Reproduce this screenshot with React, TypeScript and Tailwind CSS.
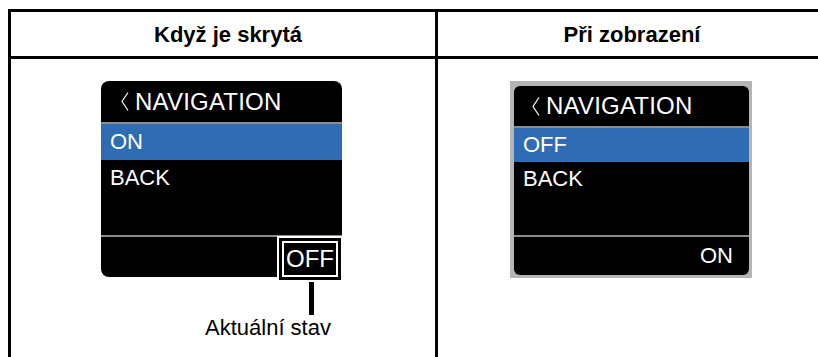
import type { ReactNode } from 'react'

function Chevron() {
  return (
    <svg width="8" height="19" viewBox="0 0 8 19" className="shrink-0">
      <polyline points="7,0.5 1,9.5 7,18.5" fill="none" stroke="white" strokeWidth="1.2" />
    </svg>
  )
}

function Title({ pl }: { pl: string }) {
  return (
    <div className={`flex items-center gap-[6px] ${pl}`}>
      <Chevron />
      <span className="text-[24px] leading-none tracking-[0.2px]">NAVIGATION</span>
    </div>
  )
}

function Row({ children, className }: { children: ReactNode; className: string }) {
  return <div className={`flex items-center pl-[9px] text-[22px] leading-none ${className}`}>{children}</div>
}

function HiddenScreen() {
  return (
    <div className="relative w-[241px]">
      <div className="flex h-[196px] flex-col overflow-hidden rounded-[8px] bg-black text-white">
        <div className="flex h-[41px] items-center">
          <Title pl="pl-[20px]" />
        </div>
        <div className="h-[2px] bg-[#8c8c8c]" />
        <Row className="h-[36px] bg-[#2f6cb4]">ON</Row>
        <Row className="h-[36px]">BACK</Row>
        <div className="flex-1" />
        <div className="h-[2px] bg-[#8c8c8c]" />
        <div className="h-[40px]" />
      </div>
      {/* highlight over current state */}
      <div className="absolute right-[-1px] top-[155px] h-[46px] w-[66px] border-2 border-white">
        <div className="h-full w-full border-[3px] border-black">
          <div className="flex h-full w-full items-center justify-center border-2 border-white bg-black text-[24px] leading-none text-white">
            OFF
          </div>
        </div>
      </div>
    </div>
  )
}

function ShownScreen() {
  return (
    <div className="w-[242px] bg-[#b5b5b5] pb-[3px] pl-[4px] pr-[3px] pt-[5px]">
      <div className="flex h-[189px] flex-col overflow-hidden rounded-[6px] bg-black text-white">
        <div className="flex h-[40px] items-center">
          <Title pl="pl-[18px]" />
        </div>
        <div className="h-[2px] bg-[#8c8c8c]" />
        <Row className="h-[34px] bg-[#2f6cb4]">OFF</Row>
        <Row className="h-[34px]">BACK</Row>
        <div className="flex-1" />
        <div className="h-[2px] bg-[#8c8c8c]" />
        <div className="flex h-[38px] items-center justify-end pr-[16px] text-[22px] leading-none">ON</div>
      </div>
    </div>
  )
}

export default function App() {
  return (
    <div className="h-[357px] w-[818px] overflow-hidden bg-white pl-[8px] pt-[9px] font-['Liberation_Sans',Arial,sans-serif] text-black">
      <div className="grid w-[820px] grid-cols-[427px_1fr] border-l-[3px] border-t-[3px] border-black">
        <div className="flex h-[47px] items-center justify-center border-b-[3px] border-r-[3px] border-black pl-[10px] text-[22px] font-bold">
          Když je skrytá
        </div>
        <div className="flex h-[47px] items-center justify-center border-b-[3px] border-black pr-[2px] text-[22px] font-bold">
          Při zobrazení
        </div>
        <div className="h-[300px] border-r-[3px] border-black pl-[90px] pt-[22px]">
          <HiddenScreen />
          <div className="ml-[208px] h-[38px] w-[5px] bg-black" />
          <div className="ml-[104px] text-[22px] leading-[25px]">Aktuální stav</div>
        </div>
        <div className="h-[300px] pl-[72px] pt-[22px]">
          <ShownScreen />
        </div>
      </div>
    </div>
  )
}
